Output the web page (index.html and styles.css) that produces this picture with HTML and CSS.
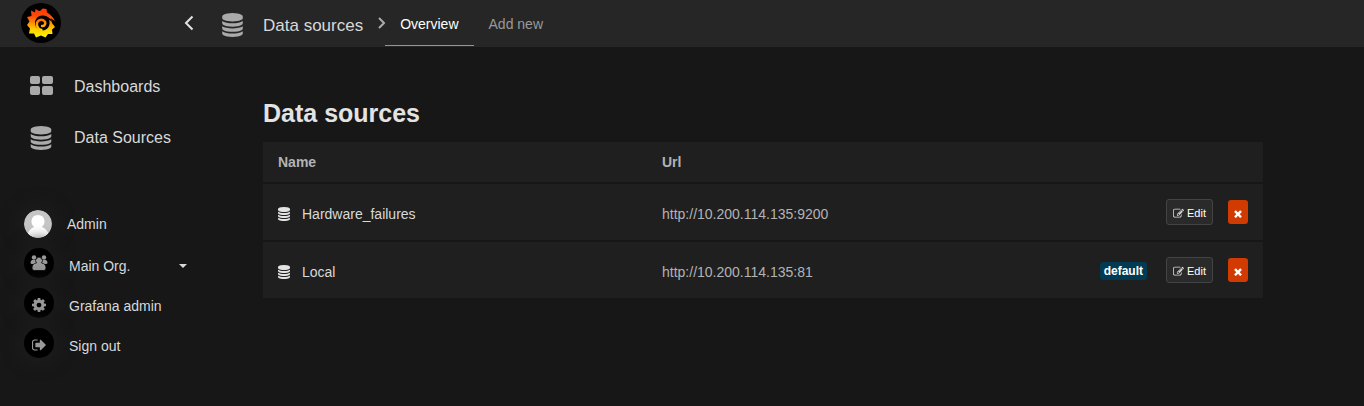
FILE: index.html
```html
<!DOCTYPE html>
<html lang="en">
<head>
<meta charset="utf-8">
<title>Data sources</title>
<link rel="stylesheet" href="styles.css">
</head>
<body>
<svg class="sprite" aria-hidden="true">
  <symbol id="database" viewBox="0 0 1536 1792"><path d="M768 768q237 0 443-43t325-127v170q0 69-103 128t-280 93.5-385 34.5-385-34.5-280-93.5-103-128v-170q119 84 325 127t443 43zm0 768q237 0 443-43t325-127v170q0 69-103 128t-280 93.5-385 34.5-385-34.5-280-93.5-103-128v-170q119 84 325 127t443 43zm0-384q237 0 443-43t325-127v170q0 69-103 128t-280 93.5-385 34.5-385-34.5-280-93.5-103-128v-170q119 84 325 127t443 43zm0-1152q208 0 385 34.5t280 93.5 103 128v128q0 69-103 128t-280 93.5-385 34.5-385-34.5-280-93.5-103-128v-128q0-69 103-128t280-93.5 385-34.5z"/></symbol>
  <symbol id="edit" viewBox="0 0 1792 1792"><path d="M888 1184l116-116-152-152-116 116v56h96v96h56zm440-720q-16-16-33 1l-350 350q-17 17-1 33t33-1l350-350q17-17 1-33zm80 594v190q0 119-84.5 203.5t-203.5 84.5h-832q-119 0-203.5-84.5t-84.5-203.5v-832q0-119 84.5-203.5t203.5-84.5h832q63 0 117 25 15 7 18 23 3 17-9 29l-49 49q-14 14-32 8-23-6-45-6h-832q-66 0-113 47t-47 113v832q0 66 47 113t113 47h832q66 0 113-47t47-113v-126q0-13 9-22l64-64q15-15 35-7t20 29zm-96-738l288 288-672 672h-288v-288zm444 132l-92 92-288-288 92-92q28-28 68-28t68 28l152 152q28 28 28 68t-28 68z"/></symbol>
  <symbol id="remove" viewBox="256 300 1280 1280"><path d="M1490 1322q0 40-28 68l-136 136q-28 28-68 28t-68-28l-294-294-294 294q-28 28-68 28t-68-28l-136-136q-28-28-28-68t28-68l294-294-294-294q-28-28-28-68t28-68l136-136q28-28 68-28t68 28l294 294 294-294q28-28 68-28t68 28l136 136q28 28 28 68t-28 68l-294 294 294 294q28 28 28 68z"/></symbol>
</svg>

<header class="navbar">
  <div class="brand">
    <a class="logo" href="#" aria-label="Home">
      <svg viewBox="0 0 40 40" width="40" height="40">
        <defs><linearGradient id="flame" gradientUnits="userSpaceOnUse" x1="0" y1="6" x2="0" y2="34"><stop offset="0" stop-color="#ff3a08"/><stop offset=".25" stop-color="#ff4a06"/><stop offset=".75" stop-color="#ffd400"/><stop offset="1" stop-color="#fff000"/></linearGradient></defs>
        <circle cx="20" cy="20" r="20" fill="#000"/>
        <path fill="url(#flame)" d="M14.500 6 L18 8 Q20 8 21.500 5.500 L25.500 6 L26 9.500 Q31 12 34 18 Q31 16 29.500 15 Q31 18 31 20 L34 24 L31 26.500 L31.500 31 L27 31 L24.500 34.500 L20 32.500 L15 34.500 L13 30.500 L8 30.500 L9 25.500 L6 22 L8.500 18.500 L6 14 L10.500 13 L10 7.500 L14 9.500 Z"/>
        <path fill="#000" d="M14 20 C14 15 18 12 22 12.500 C26 12.800 30 15 31.500 19.500 C30 18 29 17.200 28 17 C30 22 26.500 27.500 21.500 27.500 C17 27.500 14 24 14 20 Z"/>
        <path fill="none" stroke="url(#flame)" stroke-width="2.400" stroke-linecap="round" d="M21 23 C24 23.500 25.500 19.500 23 17.800 C19.500 15 15 18.500 16 22.500 C16.500 25 18.500 26.500 20.500 27"/>
      </svg>
    </a>
    <button class="collapse" type="button" aria-label="Collapse menu"><svg viewBox="0 0 10 16" width="10" height="16"><path d="M8.500 1.500 2 8l6.500 6.500"/></svg></button>
  </div>
  <div class="crumb">
    <svg class="db-nav"><use href="#database"/></svg>
    <a class="crumb-title" href="#">Data sources</a>
    <svg class="chevron" viewBox="0 0 7 12"><path d="M1 1l5 5-5 5"/></svg>
  </div>
  <nav class="tabs">
    <a class="tab active" href="#">Overview</a>
    <a class="tab" href="#">Add new</a>
  </nav>
</header>

<div class="page">
  <aside class="sidebar">
    <nav class="menu">
      <a href="#"><svg class="menu-icon" viewBox="0 0 24 24"><path d="M3 1h6q2 0 2 2v4q0 2-2 2H3q-2 0-2-2V3q0-2 2-2zm12 0h7q2 0 2 2v4q0 2-2 2h-7q-2 0-2-2V3q0-2 2-2zM3 11h6q2 0 2 2v5q0 2-2 2H3q-2 0-2-2v-5q0-2 2-2zm12 0h7q2 0 2 2v5q0 2-2 2h-7q-2 0-2-2v-5q0-2 2-2z"/></svg>Dashboards</a>
      <a href="#"><svg class="menu-icon"><use href="#database"/></svg>Data Sources</a>
    </nav>
    <nav class="account">
      <a class="user" href="#"><svg class="avatar" viewBox="0 0 28 28"><defs><clipPath id="round"><circle cx="14" cy="14" r="14"/></clipPath></defs><g clip-path="url(#round)"><path fill="#c5c5c5" d="M0 0h28v28H0z"/><path fill="#fff" d="M14 5c4 0 6.500 2.800 6.500 6.500 0 2.500-1.200 4.500-2.800 5.500 3.500 1 6 3.500 7 8V28H3.500v-3c1-4.500 3.500-7 6.800-8-1.600-1-2.800-3-2.800-5.500C7.500 7.800 10 5 14 5z"/></g></svg>Admin</a>
      <a href="#"><span class="disc"><svg viewBox="0 0 18 16" width="18" height="16"><g fill="#999"><circle cx="4" cy="2.500" r="2.200"/><circle cx="14" cy="2.500" r="2.200"/><path d="M2 5h3.500l1 4H2Q.5 9 .5 7.500T2 5zm14 0h-3.500l-1 4H16q1.500 0 1.500-1.500T16 5z"/></g><path fill="#999" stroke="#000" stroke-width=".7" d="M6.500 8A3.400 3.400 0 1 1 11.500 8Q16 8.500 16 13q0 2.500-2.500 2.500h-9Q2 15.500 2 13q0-4.500 4.500-5z"/></svg></span><span class="label">Main Org.</span><svg class="caret" viewBox="0 0 8 4"><path d="M0 0h8L4 4z"/></svg></a>
      <a href="#"><span class="disc low"><svg viewBox="128 128 1536 1536" width="14" height="14"><path d="M1152 896q0-106-75-181t-181-75-181 75-75 181 75 181 181 75 181-75 75-181zm512-109v222q0 12-8 23t-20 13l-185 28q-19 54-39 91 35 50 107 138 10 12 10 25t-9 23q-27 37-99 108t-94 71q-12 0-26-9l-138-108q-44 23-91 38-16 136-29 186-7 28-36 28h-222q-14 0-24.500-8.500t-11.500-21.500l-28-184q-49-16-90-37l-141 107q-10 9-25 9-14 0-25-11-126-114-165-168-7-10-7-23 0-12 8-23 15-21 51-66.500t54-70.500q-27-50-41-99l-183-27q-13-2-21-12.500t-8-23.500v-222q0-12 8-23t19-13l186-28q14-46 39-92-40-57-107-138-10-12-10-24 0-10 9-23 26-36 98.500-107.500t94.500-71.500q13 0 26 10l138 107q44-23 91-38 16-136 29-186 7-28 36-28h222q14 0 24.500 8.500t11.500 21.500l28 184q49 16 90 37l142-107q9-9 24-9 13 0 25 10 129 119 165 170 7 8 7 22 0 12-8 23-15 21-51 66.500t-54 70.500q26 50 41 98l183 28q13 2 21 12.500t8 23.500z"/></svg></span><span class="label">Grafana admin</span></a>
      <a href="#"><span class="disc low"><svg viewBox="64 128 1600 1536" width="14" height="14"><path d="M704 1440q0 4 1 20t.5 26.500-3 23.500-10 19.500-20.500 6.500h-320q-119 0-203.500-84.500t-84.500-203.500v-704q0-119 84.500-203.500t203.500-84.500h320q13 0 22.500 9.500t9.500 22.500q0 4 1 20t.5 26.500-3 23.500-10 19.500-20.500 6.500h-320q-66 0-113 47t-47 113v704q0 66 47 113t113 47h312l11.500 1 11.500 3 8 5.500 7 9 2 13.500zm928-544q0 26-19 45l-544 544q-19 19-45 19t-45-19-19-45v-288h-448q-26 0-45-19t-19-45v-384q0-26 19-45t45-19h448v-288q0-26 19-45t45-19 45 19l544 544q19 19 19 45z"/></svg></span><span class="label">Sign out</span></a>
    </nav>
  </aside>

  <main class="content">
    <h1>Data sources</h1>
    <table class="sources">
      <thead>
        <tr><th class="name" scope="col">Name</th><th scope="col">Url</th><td></td></tr>
      </thead>
      <tbody>
        <tr>
          <td><a class="source" href="#"><svg class="db-row"><use href="#database"/></svg>Hardware_failures</a></td>
          <td>http://10.200.114.135:9200</td>
          <td><div class="actions"><button class="edit" type="button"><svg><use href="#edit"/></svg>Edit</button><button class="remove" type="button" aria-label="Delete Hardware_failures"><svg><use href="#remove"/></svg></button></div></td>
        </tr>
        <tr>
          <td><a class="source" href="#"><svg class="db-row"><use href="#database"/></svg>Local</a></td>
          <td>http://10.200.114.135:81</td>
          <td><div class="actions"><span class="badge">default</span><button class="edit" type="button"><svg><use href="#edit"/></svg>Edit</button><button class="remove" type="button" aria-label="Delete Local"><svg><use href="#remove"/></svg></button></div></td>
        </tr>
      </tbody>
    </table>
  </main>
</div>
</body>
</html>
```
FILE: styles.css
```css
* { box-sizing: border-box; }

body {
  margin: 0;
  min-height: 100vh;
  background: #171717;
  color: #d8d9da;
  font: 14px/20px "Liberation Sans", Arial, sans-serif;
}

a { color: inherit; text-decoration: none; }
button { font: inherit; color: inherit; cursor: pointer; }
svg { display: block; flex: none; fill: currentColor; }
.sprite { position: absolute; width: 0; height: 0; }

.navbar {
  display: flex;
  height: 47px;
  background: #262626;
}
.brand {
  display: flex;
  flex: none;
  justify-content: space-between;
  align-items: center;
  width: 222px;
  padding: 0 28px 2px 21px;
}
.collapse { padding: 0; border: 0; background: none; color: #e3e3e3; }
.collapse path, .chevron path { fill: none; stroke: currentColor; stroke-width: 2; }
.crumb { display: flex; align-items: center; padding-top: 2px; }
.db-nav { width: 21px; height: 24px; color: #aaa; }
.crumb-title { margin: 2px 15px 0 20px; font-size: 17px; }
.chevron { width: 7px; height: 12px; margin-bottom: 4px; color: #aaa; }
.tabs { display: flex; }
.tab {
  height: 46px;
  padding: 14px 15px 0;
  border-bottom: 1px solid transparent;
  color: #999;
}
.tab.active { border-color: #33b5e5; color: #fff; }

.page { display: flex; }
.sidebar { flex: none; width: 221px; padding: 12px 20px 0 24px; }
.menu a { display: flex; align-items: center; gap: 21px; height: 51px; padding: 4px 0 0 5px; font-size: 16px; }
.menu-icon { width: 24px; height: 24px; color: #aaa; }
.account { display: flex; flex-direction: column; gap: 9px; margin-top: 48px; }
.account a { display: flex; align-items: center; gap: 15px; height: 31px; }
.account .user { height: 29px; }
.avatar { width: 28px; height: 28px; border-radius: 50%; box-shadow: 0 0 14px 8px #1b1b1b; }
.disc {
  display: grid;
  flex: none;
  place-items: center;
  width: 30px;
  height: 30px;
  border-radius: 50%;
  background: #000;
  box-shadow: 0 0 14px 8px #1b1b1b;
  color: #999;
}
.low { padding-top: 4px; }
.label { padding-top: 6px; }
.caret { width: 8px; height: 4px; margin: 6px 14px 0 auto; }

.content { flex: 1; max-width: 1042px; padding: 51px 0 0 42px; }
h1 { margin: 0 0 14px; font-size: 25px; line-height: 30px; color: #e3e3e3; }

.sources { width: 100%; border-collapse: collapse; }
.sources tr { height: 58px; background: #1f1f1f; border-bottom: 2px solid #171717; }
.sources thead tr { height: 41px; }
.sources th, .sources td { padding: 0 15px; text-align: left; color: #b3b3b3; }
.sources .name { width: 384px; }
.source { display: flex; align-items: center; gap: 12px; color: #d8d9da; }
.sources tbody td { padding-top: 4px; }
.db-row { width: 12px; height: 14px; color: #e3e3e3; }
.actions { display: flex; justify-content: flex-end; align-items: center; margin-bottom: 4px; }
.badge { margin: 2px 19px 0 0; padding: 1px 4px; border-radius: 3px; background: #003b53; color: #fff; font-size: 12px; font-weight: bold; line-height: 16px; }
.edit {
  display: flex;
  align-items: center;
  gap: 3px;
  height: 26px;
  margin-right: 15px;
  padding: 2px 6px 0;
  border: 1px solid #444;
  border-radius: 3px;
  background: #2a2a2a;
  color: #fff;
  font-size: 11px;
  line-height: 16px;
}
.edit svg { width: 11px; height: 11px; color: #d8d9da; }
.remove { display: grid; place-items: center; width: 20px; height: 24px; padding: 3px 0 0; border: 0; border-radius: 3px; background: #d13a00; color: #fff; }
.remove svg { width: 8px; height: 8px; }
```
